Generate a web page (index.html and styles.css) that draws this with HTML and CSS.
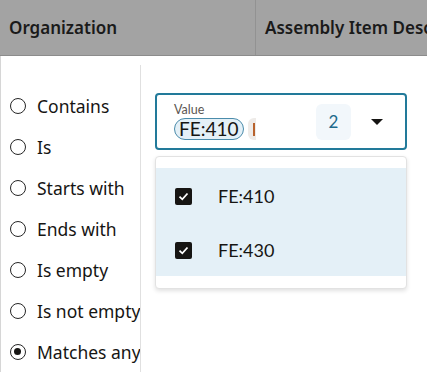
FILE: index.html
```html
<!DOCTYPE html>
<html>
<head>
  <meta http-equiv="Content-Type" content="text/html; charset=utf-8" />
  <title>Filter</title>
<link rel="stylesheet" href="styles.css">
</head>
<body>

<div class="header">
  <div class="col col-org">Organization</div>
  <div class="col col-desc">Assembly Item Description</div>
</div>

<div class="filter">
  <ul class="ops">
    <li><span class="radio"></span>Contains</li>
    <li><span class="radio"></span>Is</li>
    <li><span class="radio"></span>Starts with</li>
    <li><span class="radio"></span>Ends with</li>
    <li><span class="radio"></span>Is empty</li>
    <li><span class="radio"></span>Is not empty</li>
    <li><span class="radio on"></span>Matches any</li>
  </ul>

  <div class="values">
    <div class="field">
      <div class="field-main">
        <div class="label">Value</div>
        <div class="chips">
          <span class="chip">FE:410</span>
          <span class="chip chip-cut"><span class="caret-bar"></span></span>
        </div>
      </div>
      <span class="count">2</span>
      <svg class="arrow" width="12" height="6" viewBox="0 0 12 6"><path d="M0 0h12L6 6z" fill="#161513"/></svg>
    </div>

    <div class="menu">
      <ul class="menu-list">
        <li><span class="check"><svg width="11" height="9" viewBox="0 0 11 9"><path d="M1.5 4.6l2.8 2.7 5.2-5.8" fill="none" stroke="#fff" stroke-width="1.8"/></svg></span>FE:410</li>
        <li><span class="check"><svg width="11" height="9" viewBox="0 0 11 9"><path d="M1.5 4.6l2.8 2.7 5.2-5.8" fill="none" stroke="#fff" stroke-width="1.8"/></svg></span>FE:430</li>
      </ul>
    </div>
  </div>
</div>

</body>
</html>
```

FILE: styles.css
```css
body {
  margin: 0;
  font-family: "Noto Sans", "Open Sans", sans-serif;
  color: #161513;
  background: #fff;
  overflow: hidden;
}

.header {
  display: flex;
  height: 55px;
  background-color: #a3a3a3;
  border-bottom: 1px solid #8c8c8c;
  white-space: nowrap;
  overflow: hidden;
}
.col {
  display: flex;
  align-items: center;
  flex-shrink: 0;
  font-size: 17px;
  font-weight: 600;
  color: #1a1a1a;
}
.col-org {
  width: 246px;
  padding-left: 9px;
  border-right: 1px solid #929292;
}
.col-desc {
  padding-left: 9px;
}

.filter {
  display: flex;
  border-left: 1px solid #d6d6d6;
  height: 316px;
}

.ops {
  list-style: none;
  margin: 9px 0 0 0;
  padding: 20px 0 0 9px;
  width: 130px;
  border-right: 1px solid #e0e0e0;
  overflow: hidden;
}
.ops li {
  display: flex;
  align-items: center;
  height: 41px;
  font-size: 17.5px;
  white-space: nowrap;
}
.radio {
  box-sizing: border-box;
  width: 16px;
  height: 16px;
  border: 1.5px solid #262626;
  border-radius: 50%;
  margin-right: 11px;
  flex-shrink: 0;
  position: relative;
}
.radio.on::after {
  content: "";
  position: absolute;
  left: 3px;
  top: 3px;
  width: 7px;
  height: 7px;
  border-radius: 50%;
  background: #161513;
}

.values {
  padding: 37px 0 0 14px;
  width: 252px;
}

.field {
  box-sizing: border-box;
  display: flex;
  align-items: center;
  height: 57px;
  border: 2px solid #227a9a;
  border-radius: 4px;
  padding: 0 22px 0 17px;
}
.field-main {
  flex: 1;
}
.label {
  font-family: "Lato", sans-serif;
  font-size: 12.5px;
  color: #5b5652;
  line-height: 14px;
}
.chips {
  display: flex;
  gap: 4px;
  margin-top: 1px;
}
.chip {
  box-sizing: border-box;
  font-family: "Lato", sans-serif;
  font-size: 19px;
  line-height: 19px;
  height: 22px;
  padding: 0 4px;
  border: 1px solid #4b8cab;
  border-radius: 11px;
  background: #e4f0f7;
}
.chip-cut {
  width: 8px;
  padding: 0;
  border: none;
  border-radius: 6px 0 0 6px;
  background: #eeebe8;
  display: flex;
  align-items: center;
  justify-content: flex-end;
}
.caret-bar {
  width: 2px;
  height: 13px;
  background: #b8622c;
  margin-right: 1px;
}
.count {
  width: 35px;
  height: 36px;
  display: flex;
  align-items: center;
  justify-content: center;
  background: #f2f7fb;
  border-radius: 6px;
  color: #1e6a8b;
  font-family: "Lato", sans-serif;
  font-size: 17px;
  margin-right: 20px;
}

.menu {
  margin-top: 6px;
  box-sizing: border-box;
  width: 252px;
  border: 1px solid #e2e2e2;
  border-radius: 4px;
  box-shadow: 0 2px 4px rgba(0, 0, 0, 0.12);
  padding: 11px 0 12px 0;
  background: #fff;
}
.menu-list {
  list-style: none;
  margin: 0;
  padding: 0;
  background: #e4f0f7;
}
.menu-list li {
  display: flex;
  align-items: center;
  height: 54px;
  padding-left: 19px;
  padding-top: 2px;
  box-sizing: border-box;
  font-family: "Lato", sans-serif;
  font-size: 18px;
}
.check {
  width: 17px;
  height: 17px;
  border-radius: 2px;
  background: #161513;
  display: flex;
  align-items: center;
  justify-content: center;
  margin-right: 26px;
}
```
